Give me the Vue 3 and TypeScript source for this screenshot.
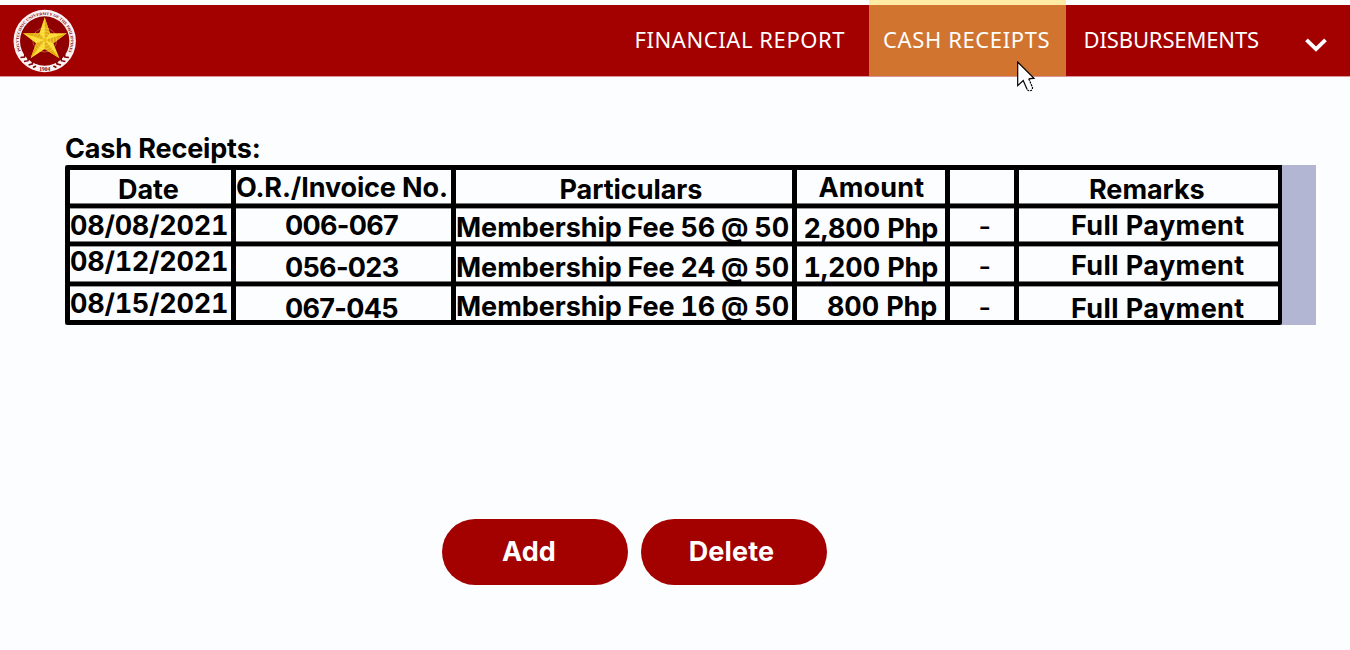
<script setup lang="ts">
interface Cell {
  text: string
  x: number
  y: number
  kind?: string
}

// x and y are the insets of the text inside its cell
const rows: Cell[][] = [
  [
    { text: 'Date', x: 48, y: 8 },
    { text: 'O.R./Invoice No.', x: 0, y: 6, kind: 'invoice' },
    { text: 'Particulars', x: 103.5, y: 8 },
    { text: 'Amount', x: 21.5, y: 6, kind: 'amount-head' },
    { text: '', x: 0, y: 0 },
    { text: 'Remarks', x: 70, y: 8 },
  ],
  [
    { text: '08/08/2021', x: 0, y: 6, kind: 'date' },
    { text: '006-067', x: 49, y: 6, kind: 'number' },
    { text: 'Membership Fee 56 @ 50', x: 0, y: 8, kind: 'item' },
    { text: '2,800 Php', x: 6.5, y: 9, kind: 'amount' },
    { text: '-', x: 28.5, y: 7, kind: 'dash' },
    { text: 'Full Payment', x: 52, y: 6, kind: 'remark' },
  ],
  [
    { text: '08/12/2021', x: 0, y: 4, kind: 'date' },
    { text: '056-023', x: 49, y: 10, kind: 'number' },
    { text: 'Membership Fee 24 @ 50', x: 0, y: 10, kind: 'item' },
    { text: '1,200 Php', x: 6.5, y: 10, kind: 'amount' },
    { text: '-', x: 28.5, y: 9, kind: 'dash' },
    { text: 'Full Payment', x: 52, y: 8, kind: 'remark' },
  ],
  [
    { text: '08/15/2021', x: 0, y: 6, kind: 'date' },
    { text: '067-045', x: 49, y: 11, kind: 'number' },
    { text: 'Membership Fee 16 @ 50', x: 0, y: 9, kind: 'item' },
    { text: '800 Php', x: 30, y: 9, kind: 'amount' },
    { text: '-', x: 28.5, y: 10, kind: 'dash' },
    { text: 'Full Payment', x: 52, y: 11, kind: 'remark' },
  ],
]
</script>

<template>
  <div class="page">
    <header class="bar">
      <svg class="logo" width="64" height="66" viewBox="13 8 64 66">
        <defs>
          <path id="ring" d="M20.7 51 A26 26 0 1 1 68.7 51" />
        </defs>
        <circle cx="44.7" cy="41" r="31.2" fill="#fbf3f3" />
        <circle cx="44.7" cy="41" r="24.7" fill="#900000" />
        <text class="seal">
          <textPath href="#ring" textLength="103" lengthAdjust="spacingAndGlyphs">POLYTECHNIC UNIVERSITY OF THE PHILIPPINES</textPath>
        </text>
        <text class="year" x="44.7" y="70.8" text-anchor="middle">1904</text>
        <g fill="none" stroke="#850000" stroke-width="1.6">
          <path d="M20.5 57.5l4-.5.5-3M24 61.5l4-.8.4-3M28.5 65l4-1.2.2-3M33 67.5l3-1.5" />
          <path d="M68.9 57.5l-4-.5-.5-3M65.4 61.5l-4-.8-.4-3M60.9 65l-4-1.2-.2-3M56.4 67.5l-3-1.5" />
        </g>
        <path fill="#fbdc2e" d="M44.7 17.2L50 33.2H66.8L53.3 43.2L59.4 58.2L44.7 48.9L30.6 58.2L36.1 43.2L23 33.2H39.4Z" />
        <path fill="#e3ac12" d="M44.7 17.2L50 33.2L44.7 40ZM66.8 33.2L53.3 43.2L44.7 40ZM59.4 58.2L44.7 48.9V40ZM30.6 58.2L36.1 43.2L44.7 40ZM23 33.2H39.4L44.7 40Z" />
        <g fill="none" stroke="#fff0a8" stroke-width=".7" opacity=".5">
          <circle cx="44.7" cy="40" r="3" />
          <circle cx="44.7" cy="40" r="6" />
          <circle cx="44.7" cy="40" r="9" />
          <circle cx="44.7" cy="40" r="12" />
        </g>
      </svg>
      <nav class="nav">
        <a class="link report">FINANCIAL REPORT</a>
        <a class="link receipts">CASH RECEIPTS</a>
        <a class="link disburse">DISBURSEMENTS</a>
        <svg class="chevron" width="24" height="16" viewBox="0 0 24 16">
          <path d="M2.5 2.8L12 12.2L21.5 2.8" fill="none" stroke="#fff" stroke-width="3.8" />
        </svg>
      </nav>
      <svg class="pointer" width="19" height="33" viewBox="0 0 19 33">
        <path d="M.7 1V24.6L6.2 19.6L10.2 28.6Q12.5 31 15.4 28.6L15.5 26.5L11.8 17.8L17 17.2Z" fill="#fff" />
        <path d="M10.2 28.6L6.2 19.6L.7 24.6V1L17 17.2L11.8 17.8" fill="none" stroke="#000" stroke-width="1.2" />
        <path d="M11.8 17.8L15.5 26.5L15.4 28.6Q12.5 31 10.2 28.6" fill="none" stroke="#000" stroke-width="1.2" stroke-dasharray="2 1" />
      </svg>
    </header>

    <main class="content">
      <h1 class="title">Cash Receipts:</h1>
      <div class="sheet">
        <div class="table">
          <template v-for="(row, r) in rows" :key="r">
            <div v-for="(cell, c) in row" :key="c" class="cell">
              <span
                class="value"
                :class="cell.kind"
                :style="{ marginLeft: cell.x + 'px', marginTop: cell.y + 'px' }"
              >{{ cell.text }}</span>
            </div>
          </template>
        </div>
      </div>
      <div class="actions">
        <button class="button add">Add</button>
        <button class="button delete">Delete</button>
      </div>
    </main>
  </div>
</template>

<style>
body {
  background: #fcfdff;
}
</style>

<style scoped>
.page {
  height: 650px;
  overflow: hidden;
  background: #fcfdff;
  color: #000;
  font: 700 27px/24px Inter, sans-serif;
}
.bar {
  position: relative;
  display: flex;
  justify-content: space-between;
  box-sizing: border-box;
  height: 77px;
  border-bottom: 1px solid #dc9495;
  background: linear-gradient(#fcfdff 5px, #a30000 5px);
}
.logo {
  margin: 8px 0 0 13px;
}
.seal {
  fill: #850000;
  font: 700 4px "Liberation Serif", serif;
}
.year {
  fill: #850000;
  font: 700 5.5px "Liberation Serif", serif;
}
.nav {
  display: flex;
}
.link {
  box-sizing: border-box;
  height: 76px;
  color: #fff;
  font: 400 22px/30px "Noto Sans", sans-serif;
  padding-top: 24px;
  white-space: nowrap;
}
.report {
  width: 235px;
  padding-left: 0.5px;
  letter-spacing: 0.58px;
}
.receipts {
  width: 197px;
  padding-left: 14px;
  letter-spacing: 0.62px;
  background: linear-gradient(#ffeba3 5px, #d1742f 5px);
}
.disburse {
  width: 238px;
  padding-left: 17.5px;
  letter-spacing: -0.13px;
}
.chevron {
  margin: 37px 22px 0 0;
}
.pointer {
  position: absolute;
  left: 1017px;
  top: 61px;
}
.content {
  padding: 60px 0 0 65px;
}
.title {
  margin: 0;
  height: 28px;
  font: inherit;
  letter-spacing: -0.15px;
}
.sheet {
  display: flex;
  box-sizing: border-box;
  width: 1251px;
  height: 160px;
  background: #b3b6d2;
}
.table {
  display: grid;
  grid-template-columns: 161px 215px 336px 148px 64px 259px;
  grid-template-rows: 34px 34px 36px 34px;
  column-gap: 5px;
  row-gap: 4px;
  padding: 5px 4px 5px 5px;
  background: #000;
  border-radius: 3px 0 2px 3px;
}
.cell {
  background: #fcfdff;
  box-shadow: inset 0 1px #999, inset 0 -1px #777;
}
.cell:nth-child(-n + 6) {
  box-shadow: inset 0 -1px #777;
}
.cell:nth-child(n + 19) {
  box-shadow: inset 0 1px #999;
}
.value {
  display: block;
  height: 24px;
  white-space: nowrap;
  letter-spacing: -0.05px;
}
.invoice {
  letter-spacing: -0.13px;
}
.date,
.item,
.amount {
  font-variant-numeric: tabular-nums;
}
.date {
  letter-spacing: -0.25px;
}
.number {
  letter-spacing: -0.7px;
}
.item {
  letter-spacing: -0.05px;
  word-spacing: -1.4px;
}
.amount {
  letter-spacing: -0.1px;
}
.amount-head {
  letter-spacing: 0.15px;
}
.remark {
  letter-spacing: 0.4px;
}
.dash {
  font-weight: 500;
}
.actions {
  display: flex;
  gap: 13px;
  padding: 194px 0 0 377px;
}
.button {
  width: 186px;
  height: 66px;
  padding: 0 0 1px;
  border: 0;
  border-radius: 33px;
  background: #a30000;
  color: #fff;
  font: inherit;
}
.add {
  padding-right: 12px;
  letter-spacing: 0.2px;
}
.delete {
  padding-right: 5px;
  letter-spacing: 0.15px;
}
</style>
